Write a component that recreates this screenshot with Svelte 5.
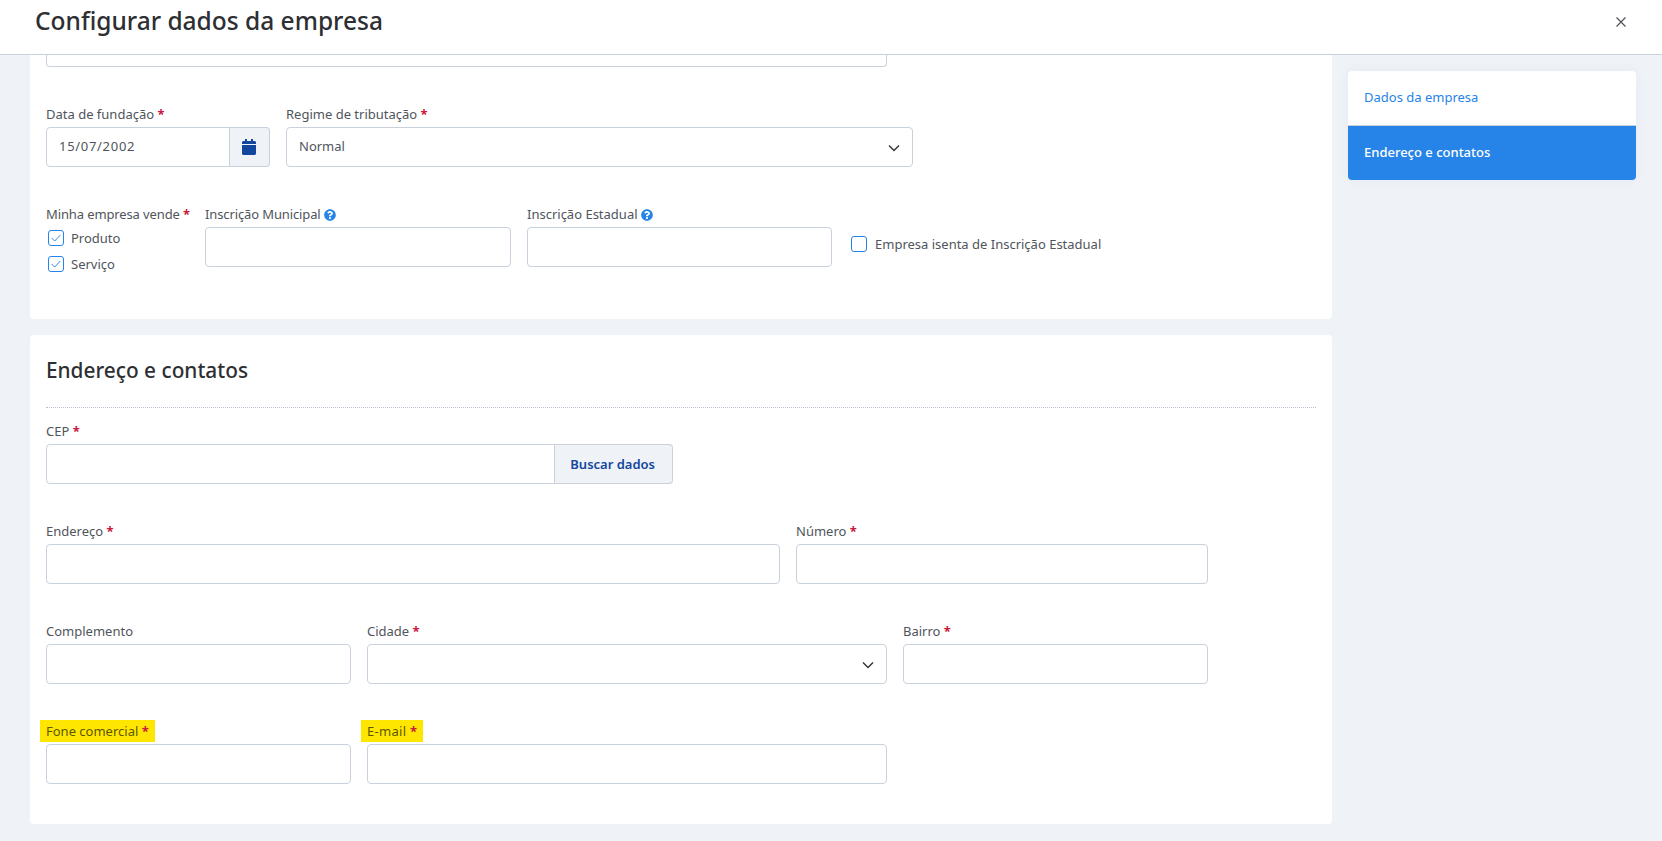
<script>
  let produto = true;
  let servico = true;
  let isenta = false;
</script>

<div class="page">
  <header>
    <h1>Configurar dados da empresa</h1>
    <button class="close" type="button" aria-label="Fechar">
      <svg viewBox="0 0 12 12" width="12" height="12"><path d="M1.5 1.5l9 9M10.5 1.5l-9 9" /></svg>
    </button>
  </header>

  <div class="body">
    <main>
      <section class="card first">
        <div class="cut-input"></div>

        <div class="row">
          <div class="field w224">
            <span class="label">Data de fundação <b>*</b></span>
            <div class="group">
              <input class="date" value="15/07/2002" />
              <button class="addon icon" type="button" aria-label="Calendário">
                <svg viewBox="0 0 448 512" width="14" height="16"><path fill="#12479d" d="M12 192h424c6.6 0 12 5.4 12 12v260c0 26.5-21.5 48-48 48H48c-26.5 0-48-21.5-48-48V204c0-6.6 5.4-12 12-12zm436-44v-36c0-26.5-21.5-48-48-48h-48V12c0-6.6-5.4-12-12-12h-40c-6.6 0-12 5.4-12 12v52H160V12c0-6.6-5.4-12-12-12h-40c-6.6 0-12 5.4-12 12v52H48C21.5 64 0 85.5 0 112v36c0 6.6 5.4 12 12 12h424c6.6 0 12-5.4 12-12z" /></svg>
              </button>
            </div>
          </div>
          <div class="field w627">
            <span class="label">Regime de tributação <b>*</b></span>
            <div class="select">
              Normal
              <svg viewBox="0 0 12 8" width="12" height="8"><path d="M1 1.5l5 5 5-5" /></svg>
            </div>
          </div>
        </div>

        <div class="row">
          <div class="field w143">
            <span class="label tight">Minha empresa vende <b>*</b></span>
            <div class="checks">
              <label class="check">
                <input type="checkbox" bind:checked={produto} />
                <span class="box">
                  <svg viewBox="0 0 16 16" width="14" height="14"><path d="M3 8l3.5 3.5L13 4.5" /></svg>
                </span>
                Produto
              </label>
              <label class="check">
                <input type="checkbox" bind:checked={servico} />
                <span class="box">
                  <svg viewBox="0 0 16 16" width="14" height="14"><path d="M3 8l3.5 3.5L13 4.5" /></svg>
                </span>
                Serviço
              </label>
            </div>
          </div>
          <div class="field w306">
            <span class="label tight">Inscrição Municipal
              <svg class="help" viewBox="0 0 512 512" width="12" height="12"><path d="M504 256c0 136.997-111.043 248-248 248S8 392.997 8 256C8 119.083 119.043 8 256 8s248 111.083 248 248zM262.655 90c-54.497 0-89.255 22.957-116.549 63.758-3.536 5.286-2.353 12.415 2.715 16.258l34.699 26.31c5.205 3.947 12.621 3.008 16.665-2.122 17.864-22.658 30.113-35.797 57.303-35.797 20.429 0 45.698 13.148 45.698 32.958 0 14.976-12.363 22.667-32.534 33.976C247.128 238.528 216 254.941 216 296v4c0 6.627 5.373 12 12 12h56c6.627 0 12-5.373 12-12v-1.333c0-28.462 83.186-29.647 83.186-106.667 0-58.002-60.165-102-116.531-102zM256 338c-25.365 0-46 20.635-46 46 0 25.364 20.635 46 46 46s46-20.636 46-46c0-25.365-20.635-46-46-46z" /></svg>
            </span>
            <input />
          </div>
          <div class="field w305">
            <span class="label">Inscrição Estadual
              <svg class="help" viewBox="0 0 512 512" width="12" height="12"><path d="M504 256c0 136.997-111.043 248-248 248S8 392.997 8 256C8 119.083 119.043 8 256 8s248 111.083 248 248zM262.655 90c-54.497 0-89.255 22.957-116.549 63.758-3.536 5.286-2.353 12.415 2.715 16.258l34.699 26.31c5.205 3.947 12.621 3.008 16.665-2.122 17.864-22.658 30.113-35.797 57.303-35.797 20.429 0 45.698 13.148 45.698 32.958 0 14.976-12.363 22.667-32.534 33.976C247.128 238.528 216 254.941 216 296v4c0 6.627 5.373 12 12 12h56c6.627 0 12-5.373 12-12v-1.333c0-28.462 83.186-29.647 83.186-106.667 0-58.002-60.165-102-116.531-102zM256 338c-25.365 0-46 20.635-46 46 0 25.364 20.635 46 46 46s46-20.636 46-46c0-25.365-20.635-46-46-46z" /></svg>
            </span>
            <input />
          </div>
          <label class="check isenta">
            <input type="checkbox" bind:checked={isenta} />
            <span class="box">
              <svg viewBox="0 0 16 16" width="14" height="14"><path d="M3 8l3.5 3.5L13 4.5" /></svg>
            </span>
            Empresa isenta de Inscrição Estadual
          </label>
        </div>
      </section>

      <section class="card second">
        <h2>Endereço e contatos</h2>

        <div class="row">
          <div class="field w627">
            <span class="label">CEP <b>*</b></span>
            <div class="group">
              <input />
              <button class="addon" type="button">Buscar dados</button>
            </div>
          </div>
        </div>

        <div class="row">
          <div class="field w734">
            <span class="label">Endereço <b>*</b></span>
            <input />
          </div>
          <div class="field w412">
            <span class="label">Número <b>*</b></span>
            <input />
          </div>
        </div>

        <div class="row">
          <div class="field w305">
            <span class="label">Complemento</span>
            <input />
          </div>
          <div class="field w520">
            <span class="label">Cidade <b>*</b></span>
            <div class="select">
              <svg viewBox="0 0 12 8" width="12" height="8"><path d="M1 1.5l5 5 5-5" /></svg>
            </div>
          </div>
          <div class="field w305">
            <span class="label">Bairro <b>*</b></span>
            <input />
          </div>
        </div>

        <div class="row">
          <div class="field w305">
            <span class="label"><mark>Fone comercial <b>*</b></mark></span>
            <input />
          </div>
          <div class="field w520">
            <span class="label"><mark class="email">E-mail <b>*</b></mark></span>
            <input />
          </div>
        </div>
      </section>
    </main>

    <aside>
      <nav>
        <a href="#dados">Dados da empresa</a>
        <a href="#endereco" class="active">Endereço e contatos</a>
      </nav>
    </aside>
  </div>
</div>

<style>
  :global(body) {
    background: #eff2f7;
  }

  .page {
    font-family: "Noto Sans", "Open Sans", sans-serif;
    font-size: 13px;
    color: #50555c;
    height: 100vh;
    overflow: hidden;
    display: flex;
    flex-direction: column;
  }

  header {
    flex: none;
    background: #fff;
    border-bottom: 1px solid #c8d1dc;
    display: flex;
    align-items: center;
    justify-content: space-between;
    padding: 0 35px 10px 35px;
    height: 44px;
  }

  h1 {
    margin: -4px 0 0;
    font-size: 24.5px;
    font-weight: 500;
    color: #2d2f33;
  }

  .close {
    border: 0;
    padding: 0;
    background: none;
    display: flex;
  }

  .close path {
    fill: none;
    stroke: #4a4d52;
    stroke-width: 1.1;
  }

  .body {
    display: flex;
    gap: 16px;
    padding-left: 30px;
  }

  main {
    width: 1302px;
    display: flex;
    flex-direction: column;
    gap: 16px;
  }

  .card {
    background: #fff;
    border-radius: 4px;
    padding: 0 16px 40px;
    display: flex;
    flex-direction: column;
    gap: 37px;
  }

  .card.first {
    border-radius: 0 0 4px 4px;
    padding-bottom: 47px;
  }

  .card.second {
    gap: 0;
  }

  .second .row + .row {
    margin-top: 37px;
  }

  .cut-input {
    width: 841px;
    height: 12px;
    box-sizing: border-box;
    border: 1px solid #c8d1dc;
    border-top: 0;
    border-radius: 0 0 4px 4px;
  }

  h2 {
    margin: 0 0 13px;
    padding: 20px 0 22px;
    font-size: 20.8px;
    line-height: 30px;
    font-weight: 500;
    color: #2d2f33;
    border-bottom: 1px dotted #b9c3cf;
  }

  .row {
    display: flex;
    gap: 16px;
  }

  .field {
    display: flex;
    flex-direction: column;
  }

  .w143 { width: 143px; }
  .w224 { width: 224px; }
  .w305 { width: 305px; }
  .w306 { width: 306px; }
  .w412 { width: 412px; }
  .w520 { width: 520px; }
  .w627 { width: 627px; }
  .w734 { width: 734px; }

  .label {
    height: 20px;
    line-height: 20px;
    margin-bottom: 3px;
    white-space: nowrap;
  }

  .label.tight {
    letter-spacing: -0.12px;
  }

  .label b {
    color: #c9183c;
    font-weight: 700;
  }

  .help {
    fill: #2684e8;
    vertical-align: -1.5px;
  }

  mark {
    display: inline-block;
    background: #ffe600;
    color: #5c5600;
    margin-left: -6px;
    padding: 1px 6px;
    line-height: 20px;
    margin-top: -1px;
  }

  mark.email {
    letter-spacing: 0.3px;
  }

  mark b {
    color: #b3261a;
  }

  input:not([type]) {
    font: inherit;
    color: inherit;
    width: 100%;
    min-width: 0;
    height: 40px;
    box-sizing: border-box;
    border: 1px solid #c8d1dc;
    border-radius: 4px;
    padding: 0 12px 2px;
    background: #fff;
    outline: none;
  }

  input.date {
    letter-spacing: 0.7px;
  }

  .group {
    display: flex;
    height: 40px;
  }

  .group input {
    border-radius: 4px 0 0 4px;
    flex: 1;
  }

  .addon {
    font: inherit;
    font-weight: 600;
    color: #12479d;
    background: #eff2f7;
    border: 1px solid #c8d1dc;
    border-left: 0;
    border-radius: 0 4px 4px 0;
    padding: 0 17px 0 15px;
    white-space: nowrap;
  }

  .addon.icon {
    width: 40px;
    padding: 0 2px 0 0;
    display: flex;
    align-items: center;
    justify-content: center;
  }

  .select {
    position: relative;
    height: 40px;
    box-sizing: border-box;
    border: 1px solid #c8d1dc;
    border-radius: 4px;
    padding: 0 12px;
    line-height: 36px;
    background: #fff;
  }

  .select svg {
    position: absolute;
    right: 12px;
    top: 16px;
  }

  .select path {
    fill: none;
    stroke: #34373b;
    stroke-width: 1.5;
  }

  .checks {
    display: flex;
    flex-direction: column;
    gap: 10px;
    padding: 3px 0 0 2px;
  }

  .check {
    display: flex;
    align-items: center;
    gap: 7px;
    height: 16px;
    white-space: nowrap;
  }

  .check input {
    display: none;
  }

  .box {
    width: 16px;
    height: 16px;
    box-sizing: border-box;
    border: 1.5px solid #2684e8;
    border-radius: 3px;
    display: flex;
    align-items: center;
    justify-content: center;
    background: #fff;
  }

  .box svg {
    visibility: hidden;
    flex: none;
  }

  .box path {
    fill: none;
    stroke: #2684e8;
    stroke-width: 1.1;
  }

  .check input:checked + .box svg {
    visibility: visible;
  }

  .isenta {
    gap: 8px;
    margin: 32px 0 0 3px;
  }

  aside {
    width: 288px;
    padding-top: 16px;
  }

  nav {
    background: #fff;
    border-radius: 4px;
    overflow: hidden;
    box-shadow: 0 0 12px rgba(60, 80, 110, 0.05);
    display: flex;
    flex-direction: column;
  }

  nav a {
    height: 54px;
    line-height: 52px;
    padding: 0 16px;
    color: #2684e8;
    text-decoration: none;
    border-bottom: 1px solid #c8d1dc;
  }

  nav a.active {
    background: #2684e8;
    color: #fff;
    font-weight: 500;
    border-bottom: 0;
  }
</style>
